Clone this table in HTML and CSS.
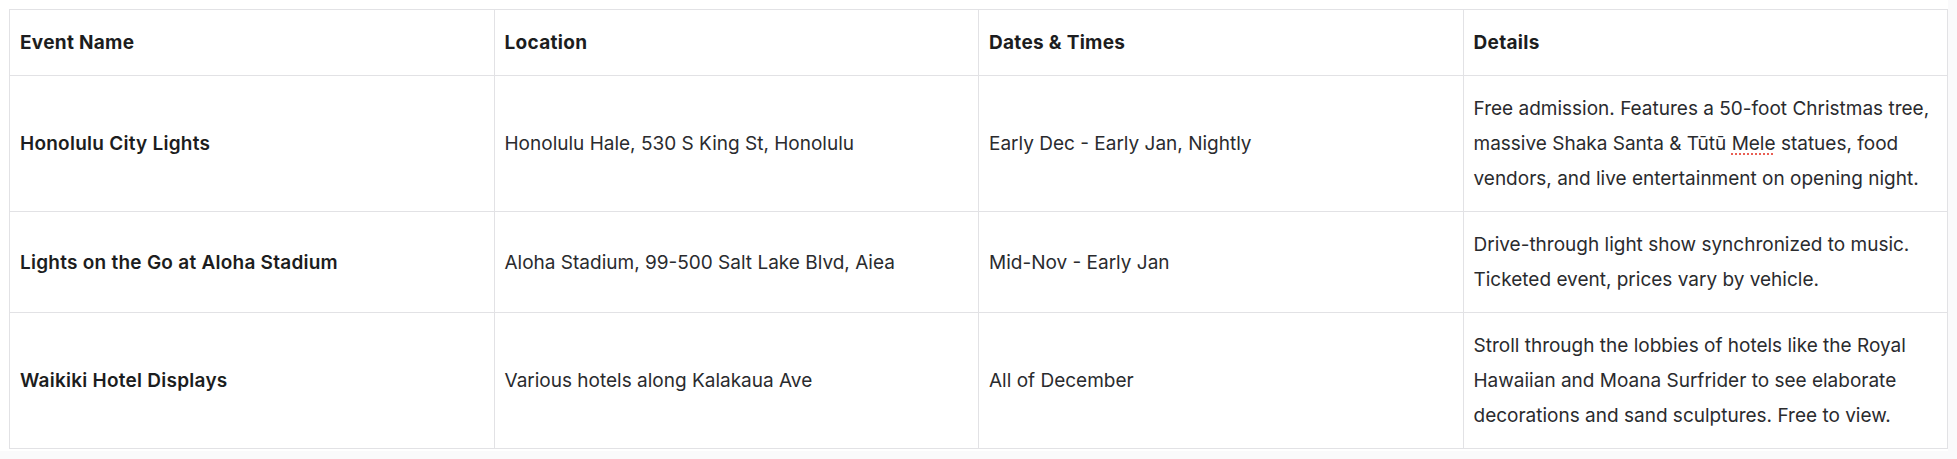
FILE: index.html
```html
<!DOCTYPE html>
<html lang="en">
<head>
<meta charset="utf-8">
<title>Holiday Lights Events</title>
<link rel="stylesheet" href="styles.css">
</head>
<body>
<div class="wrap">
  <table class="events">
    <thead>
      <tr>
        <th>Event Name</th>
        <th>Location</th>
        <th>Dates &amp; Times</th>
        <th>Details</th>
      </tr>
    </thead>
    <tbody>
      <tr>
        <td class="name">Honolulu City Lights</td>
        <td>Honolulu Hale, 530 S King St, Honolulu</td>
        <td>Early Dec - Early Jan, Nightly</td>
        <td>Free admission. Features a 50-foot Christmas tree, massive Shaka Santa &amp; Tūtū <span class="spell">Mele</span> statues, food vendors, and live entertainment on opening night.</td>
      </tr>
      <tr>
        <td class="name">Lights on the Go at Aloha Stadium</td>
        <td>Aloha Stadium, 99-500 Salt Lake Blvd, Aiea</td>
        <td>Mid-Nov - Early Jan</td>
        <td>Drive-through light show synchronized to music. Ticketed event, prices vary by vehicle.</td>
      </tr>
      <tr>
        <td class="name">Waikiki Hotel Displays</td>
        <td>Various hotels along Kalakaua Ave</td>
        <td>All of December</td>
        <td>Stroll through the lobbies of hotels like the Royal Hawaiian and Moana Surfrider to see elaborate decorations and sand sculptures. Free to view.</td>
      </tr>
    </tbody>
  </table>
</div>
</body>
</html>
```

FILE: styles.css
```css
html, body {
  margin: 0;
  padding: 0;
  background: #fafafb;
}

body {
  font-family: Inter, "Noto Sans", "Liberation Sans", sans-serif;
  color: #2a2b2e;
}

.wrap {
  width: 1948px;
  box-sizing: border-box;
  padding: 9px 0 2px 9px;
  background: #ffffff;
}

.events {
  width: 1939px;
  border-collapse: collapse;
  table-layout: fixed;
  font-size: 19px;
  line-height: 35px;
}

.events th,
.events td {
  border: 1px solid #e2e2e5;
  padding: 15px 10px;
  text-align: left;
  vertical-align: middle;
}

.events th {
  font-weight: 650;
  letter-spacing: 0.3px;
  color: #1c1d20;
}

.events td.name {
  font-weight: 600;
  letter-spacing: 0.25px;
  color: #1c1d20;
}

.spell {
  text-decoration: underline dotted #e8574c;
  text-underline-offset: 4px;
}
```
